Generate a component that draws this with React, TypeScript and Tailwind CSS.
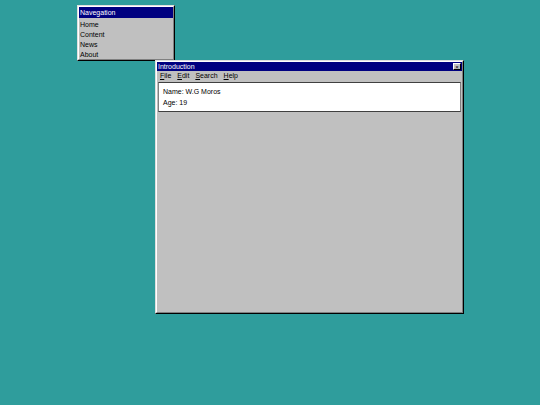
import React from "react";

const font = { fontFamily: '"Liberation Sans", Arial, sans-serif' };

function Win({ className, children }: { className: string; children: React.ReactNode }) {
  return (
    <div
      className={`absolute bg-[#c0c0c0] border border-t-[#dfdfdf] border-l-[#dfdfdf] border-r-black border-b-black ${className}`}
    >
      <div className="h-full w-full border border-t-white border-l-white border-r-[#808080] border-b-[#808080] flex flex-col">
        {children}
      </div>
    </div>
  );
}

export default function App() {
  return (
    <div className="relative w-[540px] h-[405px] bg-[#2f9d9c] overflow-hidden" style={font}>
      <Win className="left-[77px] top-[5px] w-[98px] h-[56px]">
        <div className="h-[11px] bg-[#000080] text-white text-[7px] leading-[11px] px-px">Navegation</div>
        <div className="flex flex-col text-[7px] leading-[10px] text-black px-px pt-[2px]">
          <span>Home</span>
          <span>Content</span>
          <span>News</span>
          <span>About</span>
        </div>
      </Win>
      <Win className="left-[155px] top-[60px] w-[309px] h-[254px]">
        <div className="h-[9px] bg-[#000080] text-white text-[7px] leading-[9px] pl-px flex items-center justify-between pr-px">
          <span>Introduction</span>
          <span className="w-[8px] h-[7px] bg-[#c0c0c0] border border-t-white border-l-white border-r-black border-b-black flex items-center justify-center text-black text-[6px] leading-none">
            ×
          </span>
        </div>
        <div className="h-[11px] flex items-center gap-[6px] px-[3px] text-[7px] text-black">
          <span><u>F</u>ile</span>
          <span><u>E</u>dit</span>
          <span><u>S</u>earch</span>
          <span><u>H</u>elp</span>
        </div>
        <div className="mx-px h-[30px] bg-white border border-t-[#404040] border-l-[#808080] border-r-[#808080] border-b-[#404040] px-[4px] pt-[3px] text-[7px] leading-[11px] text-black">
          <div>Name: W.G Moros</div>
          <div>Age: 19</div>
        </div>
      </Win>
    </div>
  );
}
